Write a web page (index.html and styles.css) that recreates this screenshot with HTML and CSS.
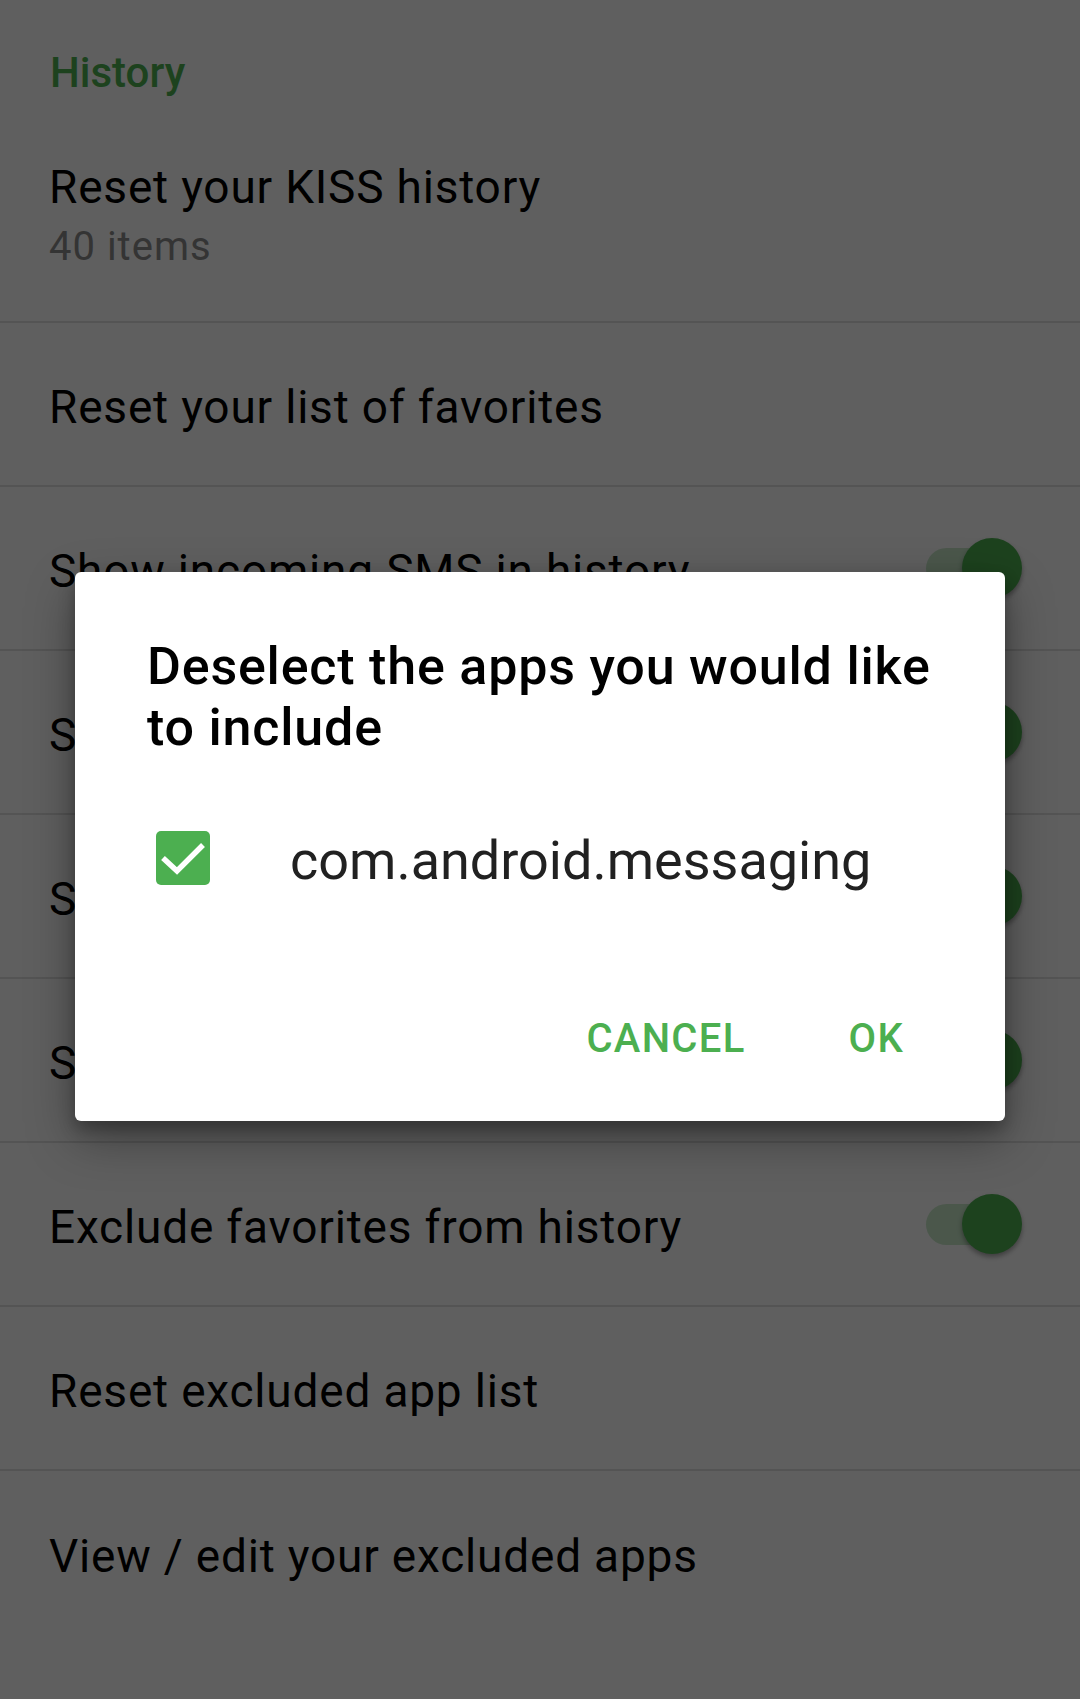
FILE: index.html
```html
<!DOCTYPE html>
<html>
<head>
<meta charset="utf-8">
<link rel="stylesheet" href="styles.css">
</head>
<body>
<div class="screen">
  <div class="prefs">
    <div class="category">History</div>
    <div class="pref pref-two">
      <div class="pref-text">
        <div class="pref-title">Reset your KISS history</div>
        <div class="pref-summary">40 items</div>
      </div>
    </div>
    <div class="pref">
      <div class="pref-title">Reset your list of favorites</div>
    </div>
    <div class="pref">
      <div class="pref-title">Show incoming SMS in history</div>
      <span class="switch"><span class="track"></span><span class="thumb"></span></span>
    </div>
    <div class="pref">
      <div class="pref-title">Show missed calls in history</div>
      <span class="switch"><span class="track"></span><span class="thumb"></span></span>
    </div>
    <div class="pref">
      <div class="pref-title">Show new apps in history</div>
      <span class="switch"><span class="track"></span><span class="thumb"></span></span>
    </div>
    <div class="pref">
      <div class="pref-title">Show settings in history</div>
      <span class="switch"><span class="track"></span><span class="thumb"></span></span>
    </div>
    <div class="pref">
      <div class="pref-title">Exclude favorites from history</div>
      <span class="switch"><span class="track"></span><span class="thumb"></span></span>
    </div>
    <div class="pref">
      <div class="pref-title">Reset excluded app list</div>
    </div>
    <div class="pref pref-last">
      <div class="pref-title">View / edit your excluded apps</div>
    </div>
    <div class="category category-next">User interface</div>
  </div>

  <div class="scrim"></div>

  <div class="dialog">
    <div class="dialog-title">Deselect the apps you would like to include</div>
    <div class="dialog-item">
      <svg class="checkbox" width="54" height="54" viewBox="0 0 54 54">
        <rect x="0" y="0" width="54" height="54" rx="5" fill="#4caf50"/>
        <polyline points="7,27 21,40 47,14" fill="none" stroke="#ffffff" stroke-width="5.5"/>
      </svg>
      <span class="item-label">com.android.messaging</span>
    </div>
    <div class="dialog-buttons">
      <span class="btn btn-cancel">CANCEL</span>
      <span class="btn">OK</span>
    </div>
  </div>
</div>
</body>
</html>
```

FILE: styles.css
```css
html, body {
  margin: 0;
  padding: 0;
}

body {
  width: 1080px;
  height: 1699px;
  overflow: hidden;
  background: #fafafa;
  font-family: Roboto, "Noto Sans", "Liberation Sans", sans-serif;
}

.screen {
  position: relative;
  width: 1080px;
  height: 1699px;
  overflow: hidden;
}

.prefs {
  display: flex;
  flex-direction: column;
}

.category {
  padding: 48px 0 0 50px;
  font-size: 42px;
  line-height: 50px;
  font-weight: 500;
  color: #4caf50;
}

.category-next {
  margin-top: 13px;
}

.pref {
  display: flex;
  align-items: center;
  justify-content: space-between;
  box-sizing: border-box;
  height: 164px;
  padding: 6px 58px 0 49px;
  border-bottom: 2px solid #dcdcdc;
}

.pref-two {
  height: auto;
  padding: 61px 58px 42px 49px;
}

.pref-last {
  border-bottom: none;
}

.pref-title {
  font-size: 46px;
  line-height: 56px;
  letter-spacing: 0.8px;
  color: #000000;
  white-space: nowrap;
}

.pref-summary {
  font-size: 40px;
  line-height: 64px;
  letter-spacing: 1px;
  color: #8a8a8a;
}

.switch {
  display: grid;
  align-items: center;
  width: 96px;
  height: 60px;
  margin-top: -6px;
}

.track {
  grid-area: 1 / 1;
  justify-self: start;
  width: 90px;
  height: 41px;
  border-radius: 21px;
  background: #c4e4c5;
}

.thumb {
  grid-area: 1 / 1;
  justify-self: end;
  width: 60px;
  height: 60px;
  border-radius: 50%;
  background: #4caf50;
  box-shadow: 0 3px 5px rgba(0, 0, 0, 0.35);
}

.scrim {
  position: absolute;
  inset: 0;
  background: rgba(0, 0, 0, 0.62);
}

.dialog {
  position: absolute;
  left: 75px;
  top: 572px;
  width: 930px;
  box-sizing: border-box;
  padding: 64px 48px 58px 72px;
  background: #ffffff;
  border-radius: 6px;
  box-shadow: 0 18px 48px rgba(0, 0, 0, 0.35), 0 8px 16px rgba(0, 0, 0, 0.25);
}

.dialog-title {
  font-size: 52px;
  line-height: 61px;
  letter-spacing: 0.8px;
  font-weight: 500;
  color: #000000;
}

.dialog-item {
  display: flex;
  align-items: center;
  height: 126px;
  margin-top: 38px;
  padding-left: 9px;
}

.checkbox {
  flex: none;
  margin-top: -3px;
  margin-right: 80px;
}

.item-label {
  padding-top: 4px;
  font-size: 54px;
  line-height: 66px;
  color: #212121;
}

.dialog-buttons {
  display: flex;
  justify-content: flex-end;
  margin-top: 93px;
  margin-right: 53px;
}

.btn {
  font-size: 40px;
  line-height: 48px;
  letter-spacing: 1.3px;
  font-weight: 500;
  color: #4caf50;
}

.btn-cancel {
  margin-right: 103px;
}
```
